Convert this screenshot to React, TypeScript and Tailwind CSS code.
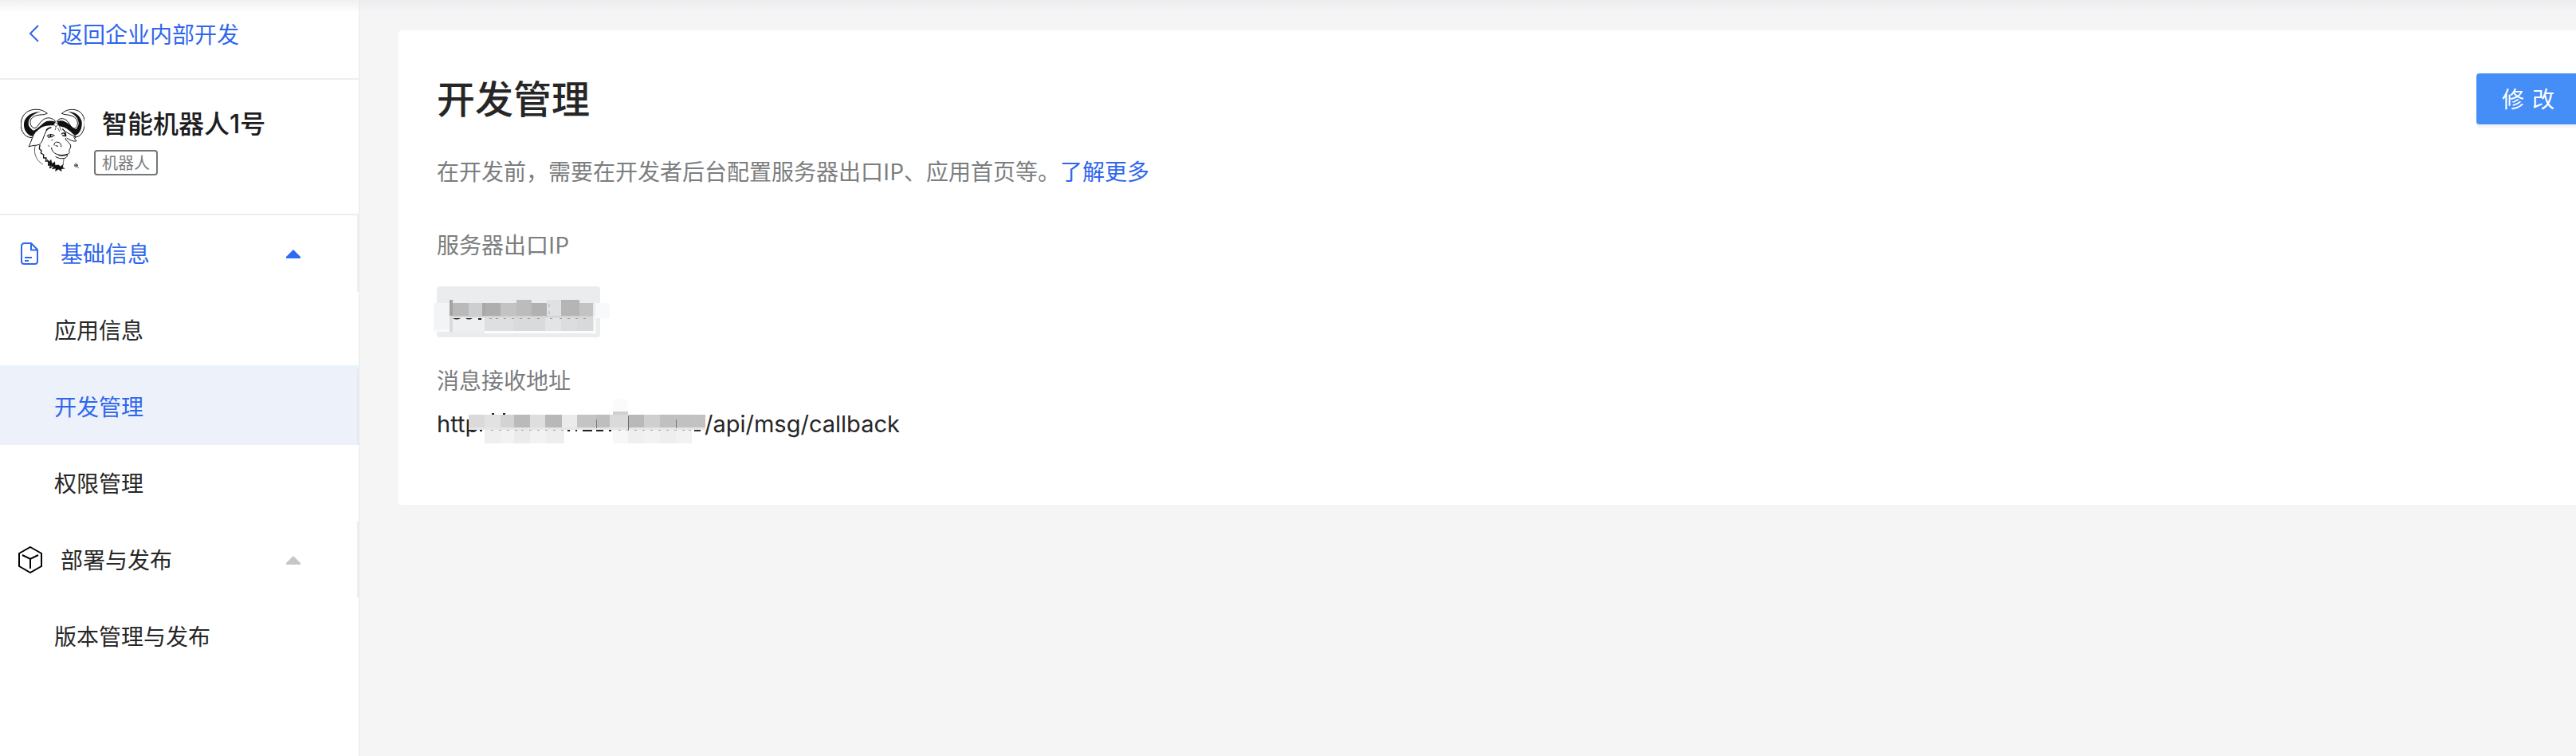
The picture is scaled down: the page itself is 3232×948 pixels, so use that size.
import type { ReactNode } from "react";

type Block = { x: number; y: number; w: number; h: number; fill: string };

const b = (x: number, y: number, w: number, h: number, fill: string): Block => ({ x, y, w, h, fill });

const ipBlocks: Block[] = [
  b(0, 21, 20, 36, "#f3f4f5"),
  b(0, 54, 24, 3, "#fafafa"),
  b(20, 17, 4, 40, "#d9dadb"),
  b(20, 17, 4, 20, "#a3a3a4"),
  b(24, 37, 40, 20, "#eeeff0"),
  b(64, 37, 36, 19, "#dedfe0"),
  b(100, 37, 40, 19, "#d9dadb"),
  b(140, 37, 20, 19, "#e3e4e5"),
  b(160, 37, 20, 19, "#dcdddf"),
  b(180, 37, 20, 19, "#d8d9da"),
  b(64, 56, 140, 3, "#fcfcfc"),
  b(201, 37, 3, 20, "#f6f7f8"),
  b(24, 21, 20, 18, "#b9b9ba"),
  b(44, 21, 17, 18, "#cdcecf"),
  b(61, 21, 4, 18, "#a8a8a9"),
  b(65, 21, 19, 18, "#aeaeaf"),
  b(84, 21, 20, 18, "#c3c3c4"),
  b(104, 17, 19, 22, "#bcbcbd"),
  b(123, 21, 19, 18, "#b1b1b2"),
  b(142, 17, 18, 22, "#e0e1e2"),
  b(160, 17, 23, 22, "#b5b5b6"),
  b(183, 21, 17, 18, "#c3c3c4"),
  b(24, 37, 176, 2, "#d2d2d3"),
  b(203, 21, 18, 19, "#f8f9fb"),
];

const urlBlocks: Block[] = [
  b(181, 0, 18, 16, "#fbfbfb"),
  b(20, 39, 20, 17, "#efefef"),
  b(40, 39, 17, 17, "#f2f2f2"),
  b(57, 39, 20, 17, "#ebebeb"),
  b(77, 39, 20, 17, "#f2f2f2"),
  b(97, 39, 23, 17, "#eeeeee"),
  b(181, 39, 19, 17, "#f7f7f7"),
  b(200, 39, 20, 17, "#efefef"),
  b(220, 39, 20, 17, "#f2f2f2"),
  b(240, 39, 20, 17, "#eeeeee"),
  b(260, 39, 20, 17, "#f2f2f2"),
  b(0, 20, 20, 19, "#dadada"),
  b(20, 20, 20, 19, "#e2e2e2"),
  b(40, 20, 17, 19, "#d3d3d3"),
  b(57, 20, 20, 19, "#bababa"),
  b(77, 20, 19, 19, "#dedede"),
  b(96, 20, 21, 19, "#b8b8b8"),
  b(117, 20, 19, 19, "#ebebeb"),
  b(136, 20, 24, 19, "#c4c4c4"),
  b(160, 20, 17, 19, "#bebebe"),
  b(177, 20, 23, 19, "#dadada"),
  b(181, 16, 19, 4, "#cfcfcf"),
  b(200, 20, 20, 19, "#b9b9b9"),
  b(220, 20, 20, 19, "#cfcfcf"),
  b(240, 20, 20, 19, "#c0c0c0"),
  b(260, 20, 20, 19, "#c1c1c1"),
  b(280, 20, 17, 19, "#c2c2c2"),
  b(0, 36, 297, 3, "#e6e6e6"),
  b(160, 26, 1, 11, "#777777"),
  b(200, 22, 1, 18, "#6b6b6b"),
  b(260, 26, 1, 11, "#777777"),
  b(29, 18, 3, 2, "#222222"),
  b(43, 18, 3, 2, "#222222"),
  b(0, 39, 6, 2, "#222222"),
  b(14, 39, 3, 2, "#222222"),
  b(124, 39, 3, 2, "#222222"),
  b(134, 39, 2, 2, "#222222"),
  b(143, 39, 12, 2, "#222222"),
  b(160, 39, 9, 2, "#222222"),
  b(176, 39, 3, 2, "#222222"),
  b(283, 39, 8, 2, "#333333"),
];

const ipDashes = [70, 78, 88, 98, 108, 118, 130, 146, 158, 168, 178, 188];
const urlDashes = [28, 38, 48, 58, 66, 76, 86, 96, 106, 116, 188, 198, 208, 218, 228, 238, 248, 258, 268, 276];

function Mosaic({ blocks }: { blocks: Block[] }) {
  return (
    <>
      {blocks.map((r, i) => (
        <rect key={i} x={r.x} y={r.y} width={r.w} height={r.h} fill={r.fill} />
      ))}
    </>
  );
}

function GnuHead() {
  return (
    <svg viewBox="48 48 240 240" className="size-20 shrink-0" fill="none" stroke="#111" strokeWidth="3" strokeLinecap="round" strokeLinejoin="round" aria-hidden="true">
      <path d="M147 66C128 48 92 47 70 62C44 82 42 124 62 146C70 154 80 158 90 158" />
      <path d="M147 66C138 74 126 70 114 73C94 76 82 88 84 103C86 114 92 122 102 122C114 116 118 102 130 92C146 80 164 80 178 96" />
      <path d="M124 60C92 60 64 76 60 104C58 128 72 148 92 153L104 134C90 130 76 118 77 102C78 84 94 68 124 60Z" fill="#111" stroke="none" />
      <path d="M96 132C112 124 122 112 134 103C148 92 162 94 178 98L172 112C152 110 136 114 124 121C114 127 108 136 100 142Z" fill="#111" stroke="none" />
      <path d="M203 67C218 50 252 46 272 62C294 80 294 120 276 144C270 152 260 157 248 156" />
      <path d="M203 67C212 73 222 70 234 74C252 78 262 90 262 104C261 116 256 124 246 124C236 118 232 104 222 94C208 82 192 84 184 96" />
      <path d="M226 61C250 58 272 74 278 98C280 122 270 144 252 150L238 138C254 132 266 118 266 102C264 84 250 68 226 61Z" fill="#111" stroke="none" />
      <path d="M186 96C202 90 216 96 228 106C238 116 248 122 258 128L250 144C236 138 226 126 214 120C204 116 194 116 188 110Z" fill="#111" stroke="none" />
      <path d="M178 96L172 108L180 116L190 108L186 96M176 100L184 104M181 116L178 128" strokeWidth="2" />
      <path d="M100 142C92 152 90 168 78 192C92 186 106 188 118 184C130 176 132 158 138 146C142 134 148 126 156 122" />
      <path d="M144 130C150 122 156 120 162 120M148 152C154 144 166 144 174 150M152 156L168 154M160 148V154" strokeWidth="4" />
      <path d="M202 144C206 138 212 140 216 148M206 150L216 152M206 126C214 132 218 142 218 152" strokeWidth="4" />
      <path d="M218 136C232 144 240 150 256 154L250 162L258 170C246 174 232 166 222 160" />
      <path d="M188 122L194 134M194 116L200 130" strokeWidth="2" />
      <path d="M174 186C172 176 182 172 192 176C198 180 202 186 200 192M180 188L188 190" strokeWidth="3" />
      <path d="M216 160C218 172 230 174 236 186C238 196 230 202 230 208C234 214 230 220 222 220C206 226 188 224 176 216C168 210 164 204 164 196" />
      <path d="M222 220C226 228 220 234 210 236C198 238 188 234 180 230M190 224C204 228 214 226 222 222" />
      <path d="M152 186L156 192M164 168L170 166M210 236C212 244 206 250 208 258" strokeWidth="2" />
      <path d="M102 190C96 214 104 242 130 258" strokeWidth="2" />
      <path d="M120 186L118 200L126 206L124 216L134 222L134 234L144 234L142 246L152 246L152 262L160 258L158 272L168 264" strokeWidth="4" />
      <path d="M146 238L156 248L162 240L166 256L176 248L178 262L190 260L198 266L208 258L206 270L214 274L200 276L202 285L190 277L178 284L180 274L166 276L172 266L158 262Z" fill="#111" strokeWidth="1" />
      <circle cx="256" cy="262" r="6" strokeWidth="2" />
      <path d="M260 267L266 272M253 262H259M256 259V265" strokeWidth="2" />
    </svg>
  );
}

function DocIcon() {
  return (
    <svg viewBox="0 0 22 28" className="ml-[2px] h-7 w-[22px]" fill="none" stroke="currentColor" strokeWidth="2" strokeLinejoin="round" aria-hidden="true">
      <path d="M5 1H13L21 9V23.500Q21 27 17.500 27H4.500Q1 27 1 23.500V5Q1 1 5 1Z" />
      <path d="M13 1V9.500H21M5 19H14M5 23H10" />
    </svg>
  );
}

function CubeIcon() {
  return (
    <svg viewBox="0 0 30 34" className="-ml-px h-[34px] w-[30px]" fill="none" stroke="#000" strokeWidth="2" aria-hidden="true">
      <path d="M15 1L29 9V25L15 33L1 25V9Z" />
      <path d="M5 11L15 16L25 11M15 16V28" />
    </svg>
  );
}

function SectionHeader({ icon, label, active = false }: { icon: ReactNode; label: string; active?: boolean }) {
  return (
    <button
      type="button"
      aria-expanded="true"
      className={`flex h-24 w-full items-center border-r-2 border-[#ededed] pl-6 pr-[71px] text-left ${active ? "text-[#2f66ee]" : "text-[#262626]"}`}
    >
      <span className="flex w-[52px] shrink-0">{icon}</span>
      <span className="flex-1 pb-[2px]">{label}</span>
      <svg viewBox="0 0 18 11" className={`h-[11px] w-[18px] ${active ? "text-[#2f6bf2]" : "text-[#c6c6c8]"}`} fill="currentColor" aria-hidden="true">
        <path d="M9 0L18 9V11H0V9Z" />
      </svg>
    </button>
  );
}

function NavItem({ label, active = false }: { label: string; active?: boolean }) {
  return (
    <a
      href="#"
      aria-current={active ? "page" : undefined}
      className={`flex h-24 items-center border-r-2 pb-[2px] pl-[68px] ${
        active ? "border-[#e4e8f0] bg-[#edf1fa] text-[#2f66ee] shadow-[0_-4px_0_#e8f4fc]" : "border-transparent text-[#262626]"
      }`}
    >
      {label}
    </a>
  );
}

export default function App() {
  return (
    <div className="relative flex min-h-screen bg-[#f5f5f5] font-['Noto_Sans_CJK_SC',sans-serif] text-[28px] leading-10">
      <div className="pointer-events-none absolute inset-x-0 top-0 h-4 bg-linear-to-b from-[#e6e6ec]/60 to-transparent" />
      <aside className="w-[452px] shrink-0 border-r-2 border-[#efefef] bg-white">
        <div className="border-b-2 border-[#eeeeee] pt-[22px] pb-9">
          <a href="#" className="flex items-center pl-9 text-[#2f66ee]">
            <svg viewBox="0 0 13 22" className="mr-[27px] h-[22px] w-[13px]" fill="none" stroke="currentColor" strokeWidth="2" aria-hidden="true">
              <path d="M12 1L2 11L12 21" />
            </svg>
            返回企业内部开发
          </a>
        </div>
        <div className="flex gap-3 border-b-2 border-[#eeeeee] pt-9 pb-12 pl-[26px]">
          <GnuHead />
          <div>
            <h2 className="pl-[10px] font-['Inter','Noto_Sans_CJK_SC',sans-serif] text-[32px] leading-10 font-medium text-[#1c1d1f]">智能机器人1号</h2>
            <span className="mt-3 inline-block h-8 rounded border-2 border-[#747677] px-2 text-[20px] leading-7 text-[#7b7d7e]">机器人</span>
          </div>
        </div>
        <nav>
          <SectionHeader icon={<DocIcon />} label="基础信息" active />
          <NavItem label="应用信息" />
          <NavItem label="开发管理" active />
          <NavItem label="权限管理" />
          <SectionHeader icon={<CubeIcon />} label="部署与发布" />
          <NavItem label="版本管理与发布" />
        </nav>
      </aside>
      <main className="min-w-0 flex-1 pt-[38px] pl-12">
        <section className="rounded-l bg-white pt-[54px] pb-[81px] pl-12">
          <div className="flex items-start justify-between">
            <h1 className="text-[48px] leading-[58px] font-medium text-[#262626]">开发管理</h1>
            <button type="button" className="flex h-16 items-center gap-[10px] rounded-l bg-[#458ef7] pr-[27px] pb-[2px] pl-8 text-white shadow-[0_4px_0_#f4f4f4]">
              <span>修</span>
              <span>改</span>
            </button>
          </div>
          <p className="mt-[38px] text-[#7b7d7e]">
            在开发前，需要在开发者后台配置服务器出口IP、应用首页等。
            <a href="#" className="text-[#2f66ee]">了解更多</a>
          </p>
          <dl>
            <dt className="mt-[52px] text-[#7b7d7e]">服务器出口IP</dt>
            <dd className="mt-[33px] h-16 w-[205px] rounded bg-[#ebecee]">
              <svg viewBox="-4 0 230 64" className="-ml-1 h-16 w-[230px] max-w-none overflow-visible" role="img" aria-label="IP">
                <g transform="translate(-4 0)">
                  <Mosaic blocks={ipBlocks} />
                  {ipDashes.map((x) => (
                    <rect key={x} x={x} y="40" width="3" height="1" fill="#9a9a9b" />
                  ))}
                  <path d="M24 40H34Q29 43 24 40ZM40 40H49Q44 43 40 40ZM56 40H60V42H56Z" fill="#222" />
                  <path d="M145 22V40" stroke="#b2b2b2" strokeDasharray="4 5" />
                </g>
              </svg>
            </dd>
            <dt className="mt-[33px] text-[#7b7d7e]">消息接收地址</dt>
            <dd className="mt-4 flex font-['Inter','Noto_Sans_CJK_SC',sans-serif] text-[29px] text-[#262626]">
              <span className="w-10">http</span>
              <svg viewBox="0 12 296 40" className="h-10 w-[296px] shrink-0 overflow-visible" role="img" aria-label="://">
                <Mosaic blocks={urlBlocks} />
                {urlDashes.map((x) => (
                  <rect key={x} x={x} y="39" width="3" height="1" fill="#a8a8a8" />
                ))}
              </svg>
              <span>/api/msg/callback</span>
            </dd>
          </dl>
        </section>
      </main>
    </div>
  );
}
